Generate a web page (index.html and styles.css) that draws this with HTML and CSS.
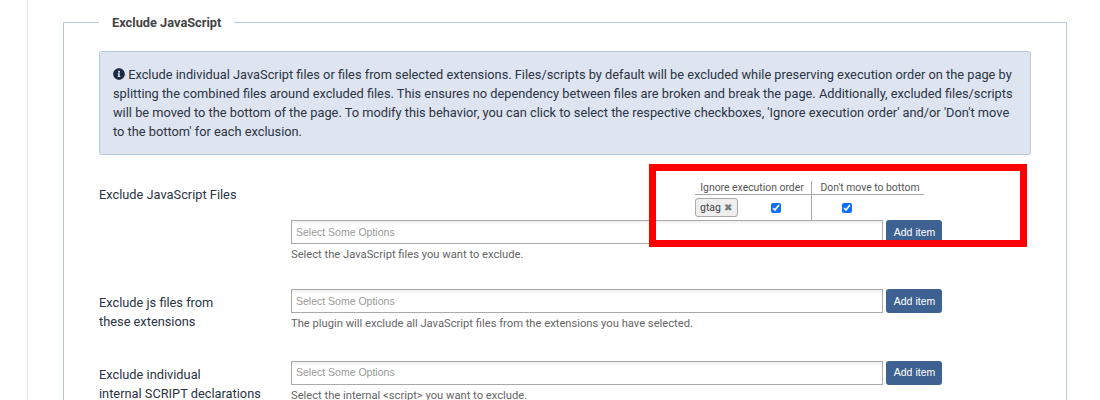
FILE: index.html
```html
<!DOCTYPE html>
<html lang="en">
<head>
<meta charset="utf-8">
<title>Exclude JavaScript</title>
<link rel="stylesheet" href="styles.css">
</head>
<body>
<div class="page">
  <fieldset class="panel">
    <legend>Exclude JavaScript</legend>
    <div class="notice">
      <svg class="info" viewBox="0 0 512 512" aria-hidden="true"><path d="M256 8C119 8 8 119 8 256s111 248 248 248 248-111 248-248S393 8 256 8zm0 110c23 0 42 19 42 42s-19 42-42 42-42-19-42-42 19-42 42-42zm56 254c0 7-5 12-12 12h-88c-7 0-12-5-12-12v-24c0-7 5-12 12-12h12v-64h-12c-7 0-12-5-12-12v-24c0-7 5-12 12-12h64c7 0 12 5 12 12v100h12c7 0 12 5 12 12v24z"/></svg>
      Exclude individual JavaScript files or files from selected extensions. Files/scripts by default will be excluded while preserving execution order on the page by splitting the combined files around excluded files. This ensures no dependency between files are broken and break the page. Additionally, excluded files/scripts will be moved to the bottom of the page. To modify this behavior, you can click to select the respective checkboxes, 'Ignore execution order' and/or 'Don't move to the bottom' for each exclusion.
    </div>

    <div class="row row-first">
      <div class="label label-first">Exclude JavaScript Files</div>
      <div class="field">
        <table class="exclusions">
          <thead>
            <tr><th class="col-a">Ignore execution order</th><th class="col-b">Don't move to bottom</th></tr>
          </thead>
          <tbody>
            <tr>
              <td class="col-a">
                <div class="cell-a">
                  <span class="tag">gtag <span class="tag-x">✖</span></span>
                  <input class="check check-a" type="checkbox" checked>
                </div>
              </td>
              <td class="col-b"><input class="check" type="checkbox" checked></td>
            </tr>
          </tbody>
        </table>
        <div class="control">
          <div class="select">Select Some Options</div>
          <button class="add" type="button">Add item</button>
        </div>
        <p class="hint">Select the JavaScript files you want to exclude.</p>
      </div>
    </div>

    <div class="row row-second">
      <div class="label">Exclude js files from<br>these extensions</div>
      <div class="field">
        <div class="control">
          <div class="select">Select Some Options</div>
          <button class="add" type="button">Add item</button>
        </div>
        <p class="hint">The plugin will exclude all JavaScript files from the extensions you have selected.</p>
      </div>
    </div>

    <div class="row row-third">
      <div class="label">Exclude individual<br>internal SCRIPT declarations</div>
      <div class="field">
        <div class="control">
          <div class="select">Select Some Options</div>
          <button class="add" type="button">Add item</button>
        </div>
        <p class="hint">Select the internal &lt;script&gt; you want to exclude.</p>
      </div>
    </div>
  </fieldset>
  <div class="highlight"></div>
</div>
</body>
</html>
```
FILE: styles.css
```css
html, body {
  margin: 0;
  height: 400px;
  overflow: hidden;
  background: #fff;
}
body {
  font-family: Roboto, "Liberation Sans", sans-serif;
  font-size: 12.8px;
  color: #333;
}
.page {
  position: relative;
  margin-left: 27px;
  width: 1040px;
  height: 400px;
  padding: 12px 0 0 35px;
  box-sizing: border-box;
  border-left: 1px solid #dfe6f1;
}
.panel {
  margin: 0;
  padding: 19px 35px 0;
  width: 1004px;
  height: 500px;
  box-sizing: border-box;
  border: 1px solid #b6c7e0;
  border-bottom: 0;
  min-width: 0;
}
.panel legend {
  margin-left: 0;
  padding: 2px 13px 0;
  font-size: 12.8px;
  font-weight: 700;
  line-height: 18px;
  color: #444;
}
.notice {
  box-sizing: border-box;
  width: 932px;
  height: 104px;
  padding: 13px 13px;
  font-size: 12.8px;
  line-height: 19px;
  color: #2b3445;
  background: #dee4f0;
  border: 1px solid #b6c7e0;
  border-radius: 3px;
}
.info {
  width: 12px;
  height: 12px;
  vertical-align: -1px;
  fill: #1c2a44;
}
.row {
  display: flex;
}
.row-first {
  margin-top: 26px;
}
.row-second {
  margin-top: 27px;
}
.row-third {
  margin-top: 30px;
}
.row-third .select {
  line-height: 20px;
}
.row-third .add {
  padding-bottom: 2px;
}
.label {
  width: 192px;
  padding-top: 4px;
  flex: none;
  font-size: 12.8px;
  line-height: 19px;
  color: #2b3445;
}
.label-first {
  padding-top: 4px;
}
.field {
  flex: 1;
}
.exclusions {
  margin-left: 404px;
  height: 39px;
  border-collapse: collapse;
  table-layout: fixed;
  width: 229px;
}
.exclusions th {
  height: 13px;
  padding: 0;
  font-size: 10.4px;
  font-weight: 400;
  line-height: 13px;
  text-align: center;
  color: #555;
  border-bottom: 1px solid #aaa;
}
.exclusions th.col-a {
  width: 114px;
  padding-right: 2px;
}
.exclusions th.col-b {
  padding-left: 4px;
}
.exclusions td {
  padding: 0;
  height: 25px;
}
.col-a {
  border-right: 1px solid #aaa;
}
.col-b {
  text-align: center;
}
.exclusions td.col-b {
  padding-right: 42px;
  padding-top: 1px;
  height: 24px;
}
.cell-a {
  display: flex;
  align-items: center;
}
.tag {
  box-sizing: border-box;
  display: inline-flex;
  align-items: center;
  gap: 3px;
  width: 43px;
  height: 19px;
  padding-left: 4px;
  font-size: 10.5px;
  color: #444;
  background: #eee;
  border: 1px solid #aaa;
  border-radius: 3px;
}
.tag-x {
  font-size: 10px;
  line-height: 10px;
  color: #777;
}
.check {
  width: 10px;
  height: 10px;
  margin: 0;
  accent-color: #0d6efd;
}
.check-a {
  margin-left: 33px;
  margin-top: 1px;
}
.control {
  display: flex;
  gap: 3px;
}
.select {
  box-sizing: border-box;
  width: 592px;
  height: 24px;
  padding-left: 4px;
  font-family: "Liberation Sans", sans-serif;
  font-size: 10.5px;
  line-height: 22px;
  color: #999;
  background: linear-gradient(#eee 0, #fff 4px);
  border: 1px solid #aaa;
}
.add {
  width: 56px;
  height: 24px;
  padding: 0 0 0 1px;
  font-family: "Liberation Sans", sans-serif;
  font-size: 10.5px;
  color: #fff;
  background: #3d6190;
  border: 0;
  border-radius: 3px;
}
.hint {
  margin: 4px 0 0;
  font-size: 11.2px;
  line-height: 14px;
  color: #666;
}
.highlight {
  position: absolute;
  left: 621px;
  top: 164px;
  width: 378px;
  height: 83px;
  box-sizing: border-box;
  border: 7px solid #f00;
}
```
